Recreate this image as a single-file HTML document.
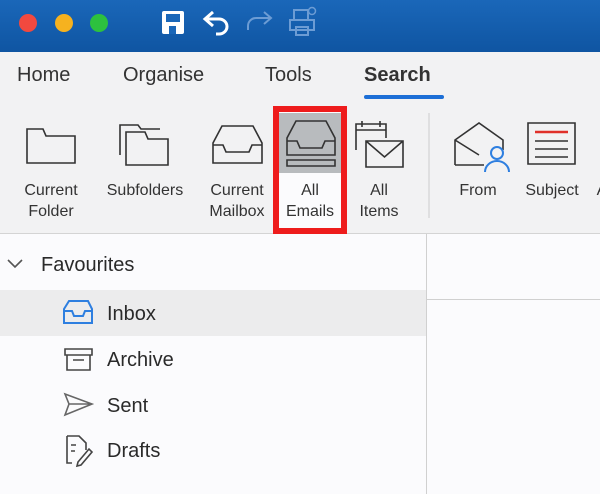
<!DOCTYPE html>
<html><head><meta charset="utf-8"><style>
*{margin:0;padding:0;box-sizing:border-box}
body{width:600px;height:494px;overflow:hidden;background:#fbfbfd;font-family:"Liberation Sans",sans-serif;position:relative;color:#2a2a2a}
.a{position:absolute}
.tb{left:0;top:0;width:600px;height:52px;background:linear-gradient(#1a67b9,#0f55a2)}
.rb{left:0;top:52px;width:600px;height:182px;background:#f2f2f3;border-bottom:1px solid #d4d4d4}
.tab{top:64px;font-size:20px;color:#333}
.lbl{font-size:16px;text-align:center;line-height:21px;color:#333}
.side{font-size:20px;color:#2a2a2a}
</style></head><body>
<div class="a tb"></div>
<div class="a" style="left:19px;top:14px;width:18px;height:18px;border-radius:50%;background:#f2493f"></div>
<div class="a" style="left:55px;top:14px;width:18px;height:18px;border-radius:50%;background:#f6b21f"></div>
<div class="a" style="left:90px;top:14px;width:18px;height:18px;border-radius:50%;background:#2dc13e"></div>
<div class="a rb"></div>
<div class="a tab" style="left:17px">Home</div>
<div class="a tab" style="left:123px">Organise</div>
<div class="a tab" style="left:265px">Tools</div>
<div class="a tab" style="left:364px;font-weight:bold">Search</div>
<div class="a" style="left:364px;top:95px;width:80px;height:4px;border-radius:2px;background:#1d6fd6"></div>
<div class="a" style="left:273px;top:106px;width:74px;height:128px;border:6px solid #ee1c1c;background:#fbfbfd"></div>
<div class="a" style="left:279px;top:113px;width:62px;height:60px;background:#b8bbbe"></div>
<div class="a" style="left:0;top:290px;width:426px;height:46px;background:#ececed"></div>
<div class="a" style="left:426px;top:234px;width:1px;height:260px;background:#d0d0d0"></div>
<div class="a" style="left:427px;top:299px;width:173px;height:1px;background:#d0d0d0"></div>
<svg class="a" style="left:0;top:0" width="600" height="494" viewBox="0 0 600 494" fill="none" stroke-width="1.6">
<!-- title icons -->
<rect x="162" y="11" width="22" height="23" rx="2" fill="#fff" stroke="none"/>
<rect x="166" y="14" width="14" height="8" fill="#1a67b9" stroke="none"/>
<rect x="169" y="26" width="7" height="8" fill="#1a67b9" stroke="none"/>
<path d="M213 12 L205 19 L213 26 M205 19 H219 a8 7.5 0 0 1 0 15 H216" stroke="#fff" stroke-width="3"/>
<path d="M264 12 L271 18 L264 24 M271 18 H256 a8 8 0 0 0 -8 8 v4" stroke="#6c9cd4" stroke-width="2"/>
<path d="M294 20 V10 H308 V20 M290 20 H314 V30 H290 Z M296 27 H308 V35 H296 Z" stroke="#6c9cd4" stroke-width="2"/>
<circle cx="312" cy="11" r="3.5" stroke="#6c9cd4" stroke-width="1.5"/>
<!-- ribbon icons -->
<g stroke="#333">
<path d="M27 129 V163 H75 V136 H46 L43 129 Z"/>
<path d="M120 155 V125 H138 L141 129 H160"/><path d="M126 132 V165 H168 V139 H148 L145 132 Z"/>
<path d="M213 163 V143 L222 126 H253 L262 143 V163 Z M213 145 H223 L226 152 H249 L252 145 H262"/>
<path d="M287 155 V138 L296 121 H326 L335 138 V155 Z M287 141 H297 L300 148 H322 L325 141 H335 M287 160 H335 V166 H287 Z"/>
<path d="M356 150 V124 H386 V138 M356 130 H386 M362 121 V127 M380 121 V127"/>
<path d="M366 141 H403 V167 H366 Z M366 141 L384.5 157 L403 141"/>
<path d="M455 165 V140 L479 123 L503 140 V150 M455 140 L479 155 M455 165 H484"/>
<path d="M528 123 H575 V164 H528 Z M535 141 H568 M535 149 H568 M535 157 H568"/>
<path d="M535 132 H568" stroke="#e0302a" stroke-width="2.5"/>
<path d="M429 113 V218" stroke="#ccc" stroke-width="1"/>
</g>
<circle cx="497" cy="153" r="6" stroke="#2e7fe0" stroke-width="2"/><path d="M485 172 a12 11 0 0 1 24 0" stroke="#2e7fe0" stroke-width="2"/>
<!-- sidebar icons -->
<path d="M8 260 L15 267 L22 260" stroke="#555"/>
<path d="M64 323 V309 L69 301 H88 L92 309 V323 Z M64 311 H72 L74 316 H83 L85 311 H92" stroke="#2e7fe0" stroke-width="2"/>
<path d="M65 349 H92 V355 H65 Z M67 355 V370 H90 V355 M73 360 H84" stroke="#444"/>
<path d="M65 394 L92 404 L65 415 L69 404 Z M69 404 H92" stroke="#666"/>
<path d="M67 436 H79 L86 443 V450 M67 436 V463 H72 M71 445 H76 M71 451 H75 M78 462 L89 449 L92 452 L81 465 L77 466 Z" stroke="#444"/>
</svg>
<div class="a lbl" style="left:11px;top:180px;width:80px">Current<br>Folder</div>
<div class="a lbl" style="left:95px;top:180px;width:100px">Subfolders</div>
<div class="a lbl" style="left:197px;top:180px;width:80px">Current<br>Mailbox</div>
<div class="a lbl" style="left:270px;top:180px;width:80px">All<br>Emails</div>
<div class="a lbl" style="left:339px;top:180px;width:80px">All<br>Items</div>
<div class="a lbl" style="left:438px;top:180px;width:80px">From</div>
<div class="a lbl" style="left:512px;top:180px;width:80px">Subject</div>
<div class="a lbl" style="left:592px;top:180px;width:20px">A</div>
<div class="a side" style="left:41px;top:254px">Favourites</div>
<div class="a side" style="left:107px;top:303px">Inbox</div>
<div class="a side" style="left:107px;top:349px">Archive</div>
<div class="a side" style="left:107px;top:395px">Sent</div>
<div class="a side" style="left:107px;top:440px">Drafts</div>
</body></html>
